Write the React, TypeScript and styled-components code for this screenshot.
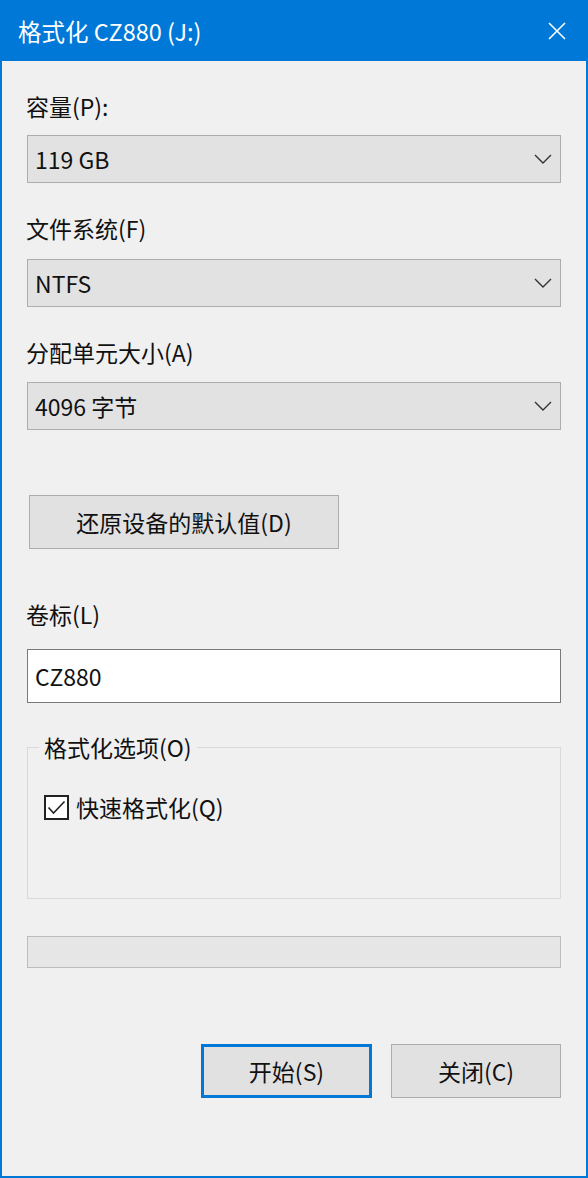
import React, { useState } from "react";
import styled, { createGlobalStyle } from "styled-components";

const GlobalStyle = createGlobalStyle`
    html, body {
        margin: 0;
        padding: 0;
        background: #f0f0f0;
    }
    * {
        box-sizing: border-box;
    }
`;

const Window = styled.div`
    width: 588px;
    height: 1178px;
    display: flex;
    flex-direction: column;
    background: #f0f0f0;
    border: 2px solid #0078d7;
    border-top: none;
    font-family: "Noto Sans CJK SC", "Noto Sans", sans-serif;
    color: #111;
`;

const TitleBar = styled.div`
    height: 61px;
    margin: 0 -2px;
    background: #0078d7;
    display: flex;
    align-items: center;
    justify-content: space-between;
    padding: 0 21px 0 18px;
    color: #fff;
    font-size: 23.5px;
`;

const CloseIcon = styled.svg`
    width: 20px;
    height: 20px;
`;

const Body = styled.div`
    flex: 1;
    display: flex;
    flex-direction: column;
    padding: 0 25px;
`;

const Label = styled.div<{ $mt: number; $mb: number }>`
    margin-top: ${(p) => p.$mt}px;
    margin-bottom: ${(p) => p.$mb}px;
    height: 30px;
    line-height: 30px;
    font-size: 23px;
    margin-left: -1px;
`;

const SelectBox = styled.div`
    height: 48px;
    display: flex;
    align-items: center;
    justify-content: space-between;
    padding: 0 8px 0 7px;
    background: #e2e2e2;
    border: 1px solid #adadad;
    font-size: 23px;
`;

const Chevron = styled.svg`
    width: 18px;
    height: 10px;
`;

const Button = styled.button<{ $primary?: boolean; $width: number }>`
    width: ${(p) => p.$width}px;
    height: 54px;
    background: #e1e1e1;
    border: ${(p) => (p.$primary ? "3px solid #0078d7" : "1px solid #adadad")};
    font-family: inherit;
    font-size: 23px;
    color: #111;
    padding: 0;
    cursor: pointer;
`;

const ResetButton = styled(Button)`
    margin-top: 65px;
    margin-left: 2px;
`;

const TextInput = styled.input`
    height: 54px;
    width: 100%;
    background: #fff;
    border: 1px solid #7a7a7a;
    padding: 0 7px;
    font-family: inherit;
    font-size: 23px;
    color: #111;
    outline: none;
`;

const Group = styled.fieldset`
    margin: 29px 0 0 0;
    padding: 0 16px 78px 16px;
    border: 1px solid #d9d9d9;
    min-width: 0;
`;

const Legend = styled.legend`
    padding: 0 5px;
    margin-left: -5px;
    height: 30px;
    line-height: 30px;
    font-size: 23px;
`;

const CheckRow = styled.label`
    margin-top: 32px;
    display: flex;
    align-items: center;
    gap: 7px;
    font-size: 23px;
    height: 26px;
    cursor: pointer;
`;

const CheckBox = styled.span`
    width: 25px;
    height: 25px;
    border: 2px solid #222;
    background: #fff;
    display: flex;
    align-items: center;
    justify-content: center;
`;

const Progress = styled.div`
    margin-top: 37px;
    height: 32px;
    background: #e6e6e6;
    border: 1px solid #bcbcbc;
`;

const Footer = styled.div`
    margin-top: 76px;
    display: flex;
    justify-content: flex-end;
    gap: 19px;
`;

const fields = [
    { label: "容量(P):", value: "119 GB", mt: 30, mb: 14 },
    { label: "文件系统(F)", value: "NTFS", mt: 30, mb: 16 },
    { label: "分配单元大小(A)", value: "4096 字节", mt: 30, mb: 15 },
];

export default function App() {
    const [volume, setVolume] = useState("CZ880");
    const [quick, setQuick] = useState(true);

    return (
        <>
            <GlobalStyle />
            <Window>
                <TitleBar>
                    <span>格式化 CZ880 (J:)</span>
                    <CloseIcon viewBox="0 0 20 20">
                        <path d="M2 2 L18 18 M18 2 L2 18" stroke="#fff" strokeWidth="1.6" fill="none" />
                    </CloseIcon>
                </TitleBar>
                <Body>
                    {fields.map((f) => (
                        <React.Fragment key={f.label}>
                            <Label $mt={f.mt} $mb={f.mb}>{f.label}</Label>
                            <SelectBox>
                                <span>{f.value}</span>
                                <Chevron viewBox="0 0 18 10">
                                    <path d="M1 1 L9 9 L17 1" stroke="#333" strokeWidth="1.4" fill="none" />
                                </Chevron>
                            </SelectBox>
                        </React.Fragment>
                    ))}
                    <ResetButton $width={310}>还原设备的默认值(D)</ResetButton>
                    <Label $mt={50} $mb={20}>卷标(L)</Label>
                    <TextInput value={volume} onChange={(e) => setVolume(e.target.value)} />
                    <Group>
                        <Legend>格式化选项(O)</Legend>
                        <CheckRow onClick={() => setQuick(!quick)}>
                            <CheckBox>
                                {quick && (
                                    <svg width="19" height="15" viewBox="0 0 19 15">
                                        <path d="M1.5 7.5 L6.5 13 L17.5 1.5" stroke="#222" strokeWidth="1.6" fill="none" />
                                    </svg>
                                )}
                            </CheckBox>
                            快速格式化(Q)
                        </CheckRow>
                    </Group>
                    <Progress />
                    <Footer>
                        <Button $primary $width={171}>开始(S)</Button>
                        <Button $width={170}>关闭(C)</Button>
                    </Footer>
                </Body>
            </Window>
        </>
    );
}
